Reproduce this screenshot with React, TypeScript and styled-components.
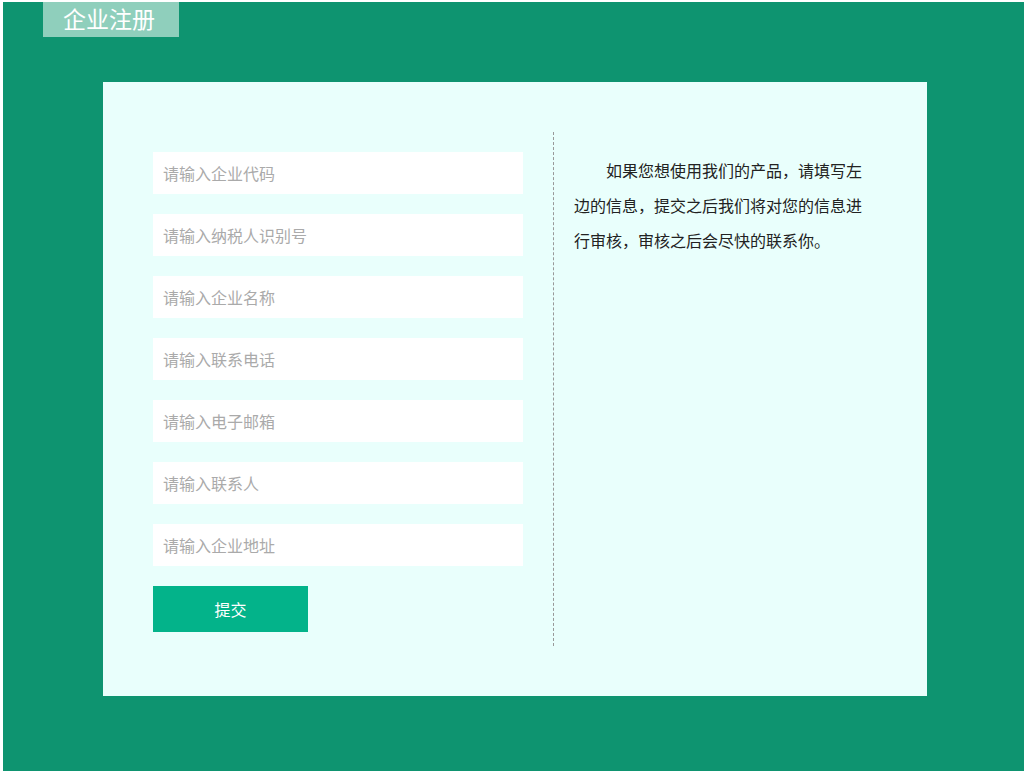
import React from "react";
import styled, { createGlobalStyle } from "styled-components";

const GlobalStyle = createGlobalStyle`
  body {
    margin: 0;
    background: #ffffff;
    font-family: "Microsoft YaHei", "Noto Sans CJK SC", "Noto Sans", sans-serif;
  }
  * { box-sizing: border-box; }
`

const fields = [
  "请输入企业代码",
  "请输入纳税人识别号",
  "请输入企业名称",
  "请输入联系电话",
  "请输入电子邮箱",
  "请输入联系人",
  "请输入企业地址",
];

function App() {
  return (
    <>
      <GlobalStyle />
      <Page>
        <Tab>企业注册</Tab>
        <Card>
          <Form onSubmit={(e) => e.preventDefault()}>
            {fields.map((f) => (
              <Input key={f} placeholder={f} />
            ))}
            <Submit type="submit">提交</Submit>
          </Form>
          <Notice>
            <NoticeText>
              如果您想使用我们的产品，请填写左边的信息，提交之后我们将对您的信息进行审核，审核之后会尽快的联系你。
            </NoticeText>
          </Notice>
        </Card>
      </Page>
    </>
  )
}

export default App;

const Page = styled.div`
  margin: 2px 0 0 3px;
  height: 769px;
  background-color: #0e9470;
  overflow: hidden;
`

const Tab = styled.div`
  margin: -2px 0 0 40px;
  width: 136px;
  height: 37px;
  padding-left: 20px;
  background-color: #8fcfbc;
  color: #ffffff;
  font-size: 23px;
  line-height: 37px;
`

const Card = styled.div`
  display: flex;
  margin: 45px 0 0 100px;
  width: 824px;
  height: 614px;
  padding: 50px 0 0 50px;
  background-color: #e9fffc;
`

const Form = styled.form`
  display: flex;
  flex-direction: column;
  gap: 20px;
  width: 370px;
  padding-top: 20px;
  margin-right: 30px;
`

const Input = styled.input`
  width: 370px;
  height: 42px;
  padding: 0 10px;
  border: none;
  outline: none;
  background: #ffffff;
  font-family: inherit;
  font-size: 16px;
  color: #333;

  &::placeholder {
    color: #aaaaaa;
  }
`

const Submit = styled.button`
  width: 155px;
  height: 46px;
  border: none;
  background-color: #03b38a;
  color: #ffffff;
  font-family: inherit;
  font-size: 16px;
  cursor: pointer;
`

const Notice = styled.div`
  width: 310px;
  height: 514px;
  border-left: 1px dashed #999999;
  padding: 21px 0 0 20px;
`

const NoticeText = styled.p`
  margin: 0;
  width: 290px;
  font-size: 16px;
  line-height: 35px;
  text-indent: 2em;
  color: #222222;
`
